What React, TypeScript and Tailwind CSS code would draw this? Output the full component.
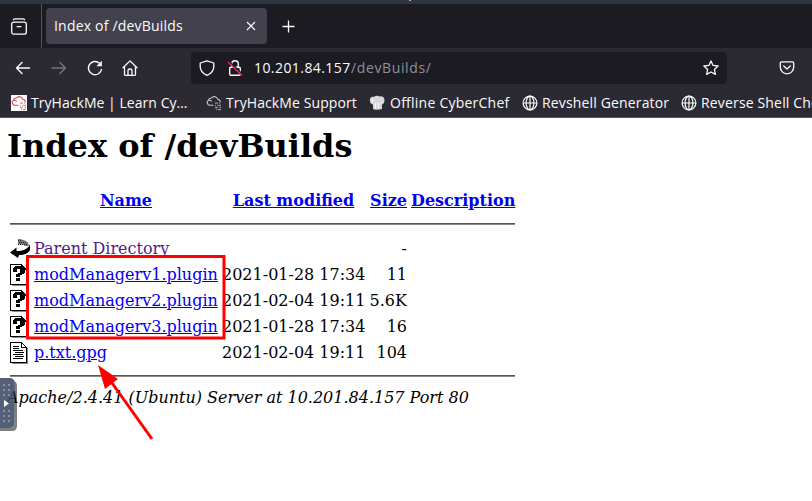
import React from "react";

const ui = "font-['Open_Sans','Noto_Sans',sans-serif]";

function Cloud({ color }: { color: string }) {
  return (
    <svg width="16" height="16" viewBox="0 0 16 16" fill="none" stroke={color} strokeWidth="1.1">
      <path d="M7.500 10.200H4A2.700 2.700 0 0 1 2.500 5.200 2.800 2.800 0 0 1 5.500 3 3.600 3.600 0 0 1 11.800 4.300 2.600 2.600 0 0 1 14.200 7.400" />
      <path d="M2.500 5.400c1.300-.4 2.500 0 3.200 1" />
      <path d="M9 8.200h3M13 8.200h1M9 10.400h1M11.500 10.400H15M9 12.500h3M13.500 12.500H15M10 14.700h1M12 14.700h3" opacity=".65" strokeWidth="1.3" />
    </svg>
  );
}

function Globe() {
  return (
    <svg width="16" height="16" viewBox="0 0 16 16" fill="none" stroke="#fbfbfe" strokeWidth="1.2">
      <circle cx="8" cy="8" r="6.9" />
      <ellipse cx="8" cy="8" rx="3.900" ry="6.9" />
      <path d="M1 8h14M8 1v14" />
    </svg>
  );
}

function Chef() {
  return (
    <svg width="16" height="16" viewBox="0 0 16 16">
      <path d="M4 14V9.500C1 9 0 5 1.500 3c1-1.500 2.500-1.500 3.500-1C6.500.5 9 .5 10 1.500c3-1 5.500.5 5.500 3.500 0 2.500-1 4-2.500 4.500V14C10 15 6 15 4 14Z" fill="#d8d8d8" />
      <path d="M3.500 3.500v4M6.500 8v5.500M9.500 8v5.500" stroke="#f8f8f8" strokeWidth="1.200" />
    </svg>
  );
}

function BackIcon() {
  return (
    <svg width="20" height="20" viewBox="0 0 20 20">
      <path d="M8 0h2l5 1.500 3 2 1 3.500h-4l-2-1.500H8Z" fill="#777" />
      <path d="M8 1.500h4M9 3.500h7M8 5.500h10" stroke="#222" strokeDasharray="1 1" shapeRendering="crispEdges" />
      <path d="M20 5v6c-2 3.500-5 5-11 5l-1 3-8-5.500 6.500-5V12c4 0 7.500-.5 10-2.500C18.500 8 19.500 7 20 5Z" fill="#000" />
    </svg>
  );
}

function Sheet({ kind }: { kind: "unknown" | "text" }) {
  return (
    <svg width="20" height="22" viewBox="0 0 20 22" fill="none" shapeRendering="crispEdges">
      <path d="M2 21.500h15.500V6" stroke="#888" />
      <path d="M.5.5h11l5 5v15H.5Z" fill="#fff" stroke="#000" />
      <path d="M11.500.5v5h5" stroke="#000" />
      {kind === "text" ? (
        <path d="M3 4.500h6M3 6.500h6M3 8.500h10M5 10.500h9M3 12.500h10M5 14.500h9M3 16.500h10" stroke="#000" />
      ) : (
        <path d="M3 4h1V3h1V2h8v1h1v1h1v5h-1v1h-2v1h-2v2H6v-3h2V9h2V5H7v3H3ZM6 14h4v3H6Z" fill="#000" />
      )}
    </svg>
  );
}

const rows = [
  { name: "modManagerv1.plugin", date: "2021-01-28 17:34", size: "11" },
  { name: "modManagerv2.plugin", date: "2021-02-04 19:11", size: "5.6K" },
  { name: "modManagerv3.plugin", date: "2021-01-28 17:34", size: "16" },
  { name: "p.txt.gpg", date: "2021-02-04 19:11", size: "104" },
];

const grid = "grid grid-cols-[24px_188px_144px_41px_108px]";
const link = "text-[#0000ee] underline";

function Browser() {
  return (
    <header className={`${ui} text-[14px] text-[#fbfbfe] whitespace-nowrap`}>
      <div className="h-1 bg-[#2f3542] overflow-hidden"><div className="ml-[409px] h-px w-[2px] bg-[#b9b0ac]" /></div>
      <div className="flex h-11 bg-[#1c1b22]">
        <div className="flex w-[42px] items-center border-r border-[#55545d] pl-[11px]">
          <svg width="16" height="17" viewBox="0 0 16 17" fill="none" stroke="#fbfbfe" strokeWidth="1.300" strokeLinecap="round">
            <path d="M2.500 1.500C3 1 3.500.8 4 .8h8c.5 0 1 .2 1.500.7" />
            <rect x=".7" y="4.200" width="14.600" height="12" rx="2" />
            <path d="M6.200 8.700h3.600" />
          </svg>
        </div>
        <div className="ml-1 mt-1 flex h-9 w-[221px] items-center rounded bg-[#42414d] pl-2">
          <span className="w-[192px] tracking-[0.2px]">Index of /devBuilds</span>
          <svg width="10" height="10" viewBox="0 0 10 10" stroke="#fbfbfe" strokeWidth="1.100"><path d="m1 1 8 8M9 1 1 9" /></svg>
        </div>
        <svg className="ml-[15px] mt-[16px]" width="13" height="13" viewBox="0 0 13 13" stroke="#fbfbfe" strokeWidth="1.300"><path d="M6.500.5v12M.5 6.500h12" /></svg>
      </div>
      <div className="flex h-10 items-center bg-[#2b2a33] pl-[15px]">
        <svg width="16" height="16" viewBox="0 0 16 16" fill="none" stroke="#fbfbfe" strokeWidth="1.400" strokeLinecap="round" strokeLinejoin="round"><path d="M14.500 8H1.500M7 2.500 1.500 8 7 13.500" /></svg>
        <svg className="ml-5" width="16" height="16" viewBox="0 0 16 16" fill="none" stroke="#77767d" strokeWidth="1.400" strokeLinecap="round" strokeLinejoin="round"><path d="M1 8h13.500M9 2.500 14.500 8 9 13.500" /></svg>
        <svg className="ml-5" width="16" height="16" viewBox="0 0 16 16" fill="none" stroke="#fbfbfe" strokeWidth="1.400"><path d="M12.500 3.200A6.600 6.600 0 1 0 14.600 9" /><path d="M14.900.8v5.500H9.400Z" fill="#fbfbfe" stroke="none" /></svg>
        <svg className="ml-[19px]" width="16" height="16" viewBox="0 0 16 16" fill="none" stroke="#fbfbfe" strokeWidth="1.300" strokeLinejoin="round" strokeLinecap="round"><path d="m1 7.800 7-6.900 7 6.900M2.500 7v7.500c0 .5.3.8.8.8h9.400c.5 0 .8-.3.8-.8V7M6 15V10.500c0-1 .7-1.500 2-1.500s2 .5 2 1.500V15" /></svg>
        <div className="ml-[53px] flex h-8 w-[536px] items-center rounded bg-[#1c1b22] pl-2">
          <svg width="16" height="16" viewBox="0 0 16 16" fill="none" stroke="#fbfbfe" strokeWidth="1.300" strokeLinejoin="round"><path d="M8 .8 14.800 3v3.500c0 4-2.500 7-6.800 8.800C3.700 13.500 1.200 10.500 1.200 6.500V3Z" /></svg>
          <svg className="ml-3" width="16" height="16" viewBox="0 0 16 16" fill="none" stroke="#fbfbfe" strokeWidth="1.400"><rect x="2.700" y="7.200" width="10.600" height="8" rx="1.200" /><path d="M4.700 7V4a3.300 3.300 0 0 1 6.600 0v3" /><path d="m2 1.300 13 12.500" stroke="#1c1b22" strokeWidth="1.500" /><path d="m1 2 14 13.500" stroke="#e22850" strokeWidth="1.600" /></svg>
          <span className="ml-[11px] w-[97px] tracking-[0.43px]">10.201.84.157</span><span className="w-[352px] tracking-[0.62px] text-[#8f8f9d]">/devBuilds/</span>
          <svg width="16" height="16" viewBox="0 0 16 16" fill="none" stroke="#fbfbfe" strokeWidth="1.300" strokeLinejoin="round"><path d="m8 .9 2.100 4.500 5 .6-3.700 3.400 1 5L8 12l-4.400 2.400 1-5L.9 6l5-.6Z" /></svg>
        </div>
        <svg className="ml-[52px]" width="16" height="14" viewBox="0 0 16 14" fill="none" stroke="#fbfbfe" strokeWidth="1.300" strokeLinecap="round" strokeLinejoin="round"><path d="M2.500.9h11c.7 0 1.200.5 1.200 1.200v4a6.700 6.700 0 0 1-13.400 0v-4c0-.7.5-1.200 1.200-1.200Z" /><path d="m4.700 5 3.300 3 3.300-3" /></svg>
      </div>
      <div className="flex h-[30px] items-center overflow-hidden border-b border-[#55545d] bg-[#2b2a33] pl-[11px]">
        <div className="flex w-[195px] shrink-0 items-center"><span className="mr-1 bg-white"><Cloud color="#cf4850" /></span><span className="tracking-[0.04px]">TryHackMe | Learn Cy…</span></div>
        <div className="flex w-[163px] shrink-0 items-center"><span className="mr-1"><Cloud color="#c9c9cd" /></span><span className="tracking-[0.1px]">TryHackMe Support</span></div>
        <div className="flex w-[153px] shrink-0 items-center"><span className="mr-[5px]"><Chef /></span><span className="tracking-[0.24px]">Offline CyberChef</span></div>
        <div className="flex w-[159px] shrink-0 items-center"><span className="mr-1"><Globe /></span><span className="tracking-[0.15px]">Revshell Generator</span></div>
        <div className="flex shrink-0 items-center"><span className="mr-1"><Globe /></span><span className="tracking-[0.16px]">Reverse Shell Cheat</span></div>
      </div>
    </header>
  );
}

export default function App() {
  return (
    <div className="relative h-[501px] w-[812px] overflow-hidden bg-white font-['DejaVu_Serif',serif] text-[16px] leading-[26px] text-black">
      <Browser />
      <main className="pl-[7px] pt-[9px]">
        <h1 className="text-[32px] font-bold leading-[38px]">Index of /devBuilds</h1>
        <div className="ml-[3px] mt-[23px] w-[505px] whitespace-nowrap">
          <div className={`${grid} font-bold`}>
            <span /><span className="-ml-1 text-center"><a className={link}>Name</a></span><span className="-ml-px text-center"><a className={link}>Last modified</a></span><span className="text-right"><a className={link}>Size</a></span><span className="pl-1"><a className={link}>Description</a></span>
          </div>
          <div className="mb-[11px] mt-[9px] h-[2px] border-t border-[#555] bg-[#888]" />
          <div className={grid}><span className="pt-[3px]"><BackIcon /></span><a className="text-[#551a8b] underline">Parent Directory</a><span /><span className="text-right">-</span></div>
          {rows.map((r, i) => (
            <div key={r.name} className={grid}><span className="pt-[2px]"><Sheet kind={i === 3 ? "text" : "unknown"} /></span><a className={link}>{r.name}</a><span>{r.date}</span><span className="text-right">{r.size}</span></div>
          ))}
          <div className="mt-[9px] h-[2px] border-t border-[#555] bg-[#888]" />
        </div>
        <address className="mt-2 italic">Apache/2.4.41 (Ubuntu) Server at 10.201.84.157 Port 80</address>
      </main>
      <svg className="absolute left-0 top-0" width="812" height="501" fill="none">
        <rect x="27.500" y="256.500" width="196.500" height="81.500" stroke="#f00" strokeWidth="3" />
        <path d="m112 383 40 56" stroke="#f00" strokeWidth="3" />
        <path d="m98 365 20 14-13 10Z" fill="#f00" />
      </svg>
      <svg className="absolute left-0 top-[378px]" width="20" height="56" viewBox="0 0 20 56">
        <path d="M14 3q3 1 3 5v40q0 5-5 5H0v-3h10q4.500 0 4.500-5Z" fill="#000" fillOpacity=".5" />
        <path d="M0 0h9.500q5 0 5 5v40q0 5-5 5H0Z" fill="#354460" fillOpacity=".85" />
        <path d="M4 22v7l5-3.500Z" fill="#fff" />
        <path d="M3 7h2M8 7h2M3 12h2M8 12h2M3 17h2M8 17h2M3 33h2M8 33h2M3 38h2M8 38h2M3 43h2M8 43h2" stroke="#8792a6" strokeWidth="2" />
      </svg>
    </div>
  );
}
